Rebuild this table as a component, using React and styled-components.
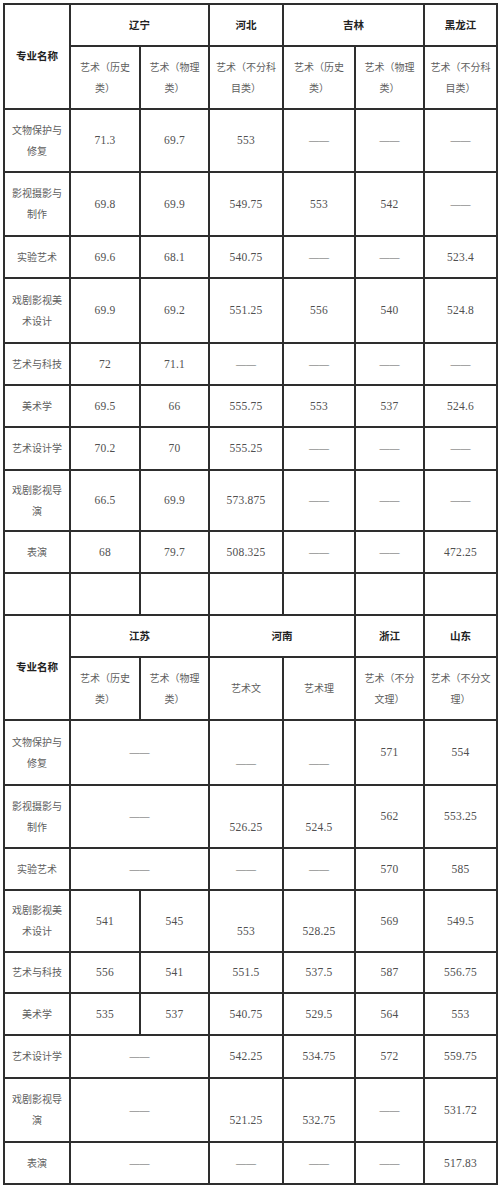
import React from "react";
import styled, { createGlobalStyle } from "styled-components";

const GlobalStyle = createGlobalStyle`
  html, body { margin: 0; padding: 0; background: #ffffff; }
  body { font-family: "Liberation Serif", "Noto Sans CJK SC", serif; }
`;

const Sheet = styled.div`
  padding: 3px 2px 3px 3px;
  width: 500px;
  box-sizing: border-box;
`;

const Grid = styled.div`
  display: grid;
  grid-template-columns: 64px 68px 67px 72px 70px 67px 71px;
  grid-template-rows: ${(p) => p.$rows.map((r) => `${r}px`).join(" ")};
  gap: 2px;
  padding: 2px;
  background: #2e2e2e;
  width: max-content;
`;

const Cell = styled.div`
  grid-column: span ${(p) => p.$span || 1};
  grid-row: span ${(p) => p.$rowSpan || 1};
  background: #ffffff;
  display: flex;
  align-items: center;
  justify-content: center;
  text-align: center;
  box-sizing: border-box;
  padding: ${(p) => (p.$drop ? "21px 5px 0" : "0 5px")};
  font-family: "Liberation Serif", "Noto Sans CJK SC", serif;
  font-size: ${(p) => (p.$head ? "10.5px" : p.$num ? "11.5px" : "10px")};
  font-weight: ${(p) => (p.$head ? 700 : 400)};
  letter-spacing: ${(p) => (p.$num ? "0.2px" : "0")};
  line-height: 21px;
  color: ${(p) => (p.$head ? "#222222" : p.$num ? "#505050" : "#5e5e5e")};
`;

const rowHeights = [
  40, 61, 61, 62, 40, 63, 40, 40, 41, 59, 40, 40,
  40, 61, 63, 61, 40, 60, 39, 40, 41, 62, 40,
];

const D = "——";

const top = {
  provinces: [
    { name: "辽宁", span: 2 },
    { name: "河北", span: 1 },
    { name: "吉林", span: 2 },
    { name: "黑龙江", span: 1 },
  ],
  subs: [
    "艺术（历史类）",
    "艺术（物理类）",
    "艺术（不分科目类）",
    "艺术（历史类）",
    "艺术（物理类）",
    "艺术（不分科目类）",
  ],
  rows: [
    ["文物保护与修复", ["71.3", "69.7", "553", D, D, D]],
    ["影视摄影与制作", ["69.8", "69.9", "549.75", "553", "542", D]],
    ["实验艺术", ["69.6", "68.1", "540.75", D, D, "523.4"]],
    ["戏剧影视美术设计", ["69.9", "69.2", "551.25", "556", "540", "524.8"]],
    ["艺术与科技", ["72", "71.1", D, D, D, D]],
    ["美术学", ["69.5", "66", "555.75", "553", "537", "524.6"]],
    ["艺术设计学", ["70.2", "70", "555.25", D, D, D]],
    ["戏剧影视导演", ["66.5", "69.9", "573.875", D, D, D]],
    ["表演", ["68", "79.7", "508.325", D, D, "472.25"]],
  ],
};

const bottom = {
  provinces: [
    { name: "江苏", span: 2 },
    { name: "河南", span: 2 },
    { name: "浙江", span: 1 },
    { name: "山东", span: 1 },
  ],
  subs: [
    "艺术（历史类）",
    "艺术（物理类）",
    "艺术文",
    "艺术理",
    "艺术（不分文理）",
    "艺术（不分文理）",
  ],
  rows: [
    ["文物保护与修复", [{ v: D, span: 2 }, { v: D, drop: true }, { v: D, drop: true }, "571", "554"]],
    ["影视摄影与制作", [{ v: D, span: 2 }, { v: "526.25", drop: true }, { v: "524.5", drop: true }, "562", "553.25"]],
    ["实验艺术", [{ v: D, span: 2 }, D, D, "570", "585"]],
    ["戏剧影视美术设计", ["541", "545", { v: "553", drop: true }, { v: "528.25", drop: true }, "569", "549.5"]],
    ["艺术与科技", ["556", "541", "551.5", "537.5", "587", "556.75"]],
    ["美术学", ["535", "537", "540.75", "529.5", "564", "553"]],
    ["艺术设计学", [{ v: D, span: 2 }, "542.25", "534.75", "572", "559.75"]],
    ["戏剧影视导演", [{ v: D, span: 2 }, { v: "521.25", drop: true }, { v: "532.75", drop: true }, D, "531.72"]],
    ["表演", [{ v: D, span: 2 }, D, D, D, "517.83"]],
  ],
};

function ValueCell({ item }) {
  const v = typeof item === "string" ? { v: item } : item;
  return (
    <Cell $span={v.span} $drop={v.drop} $num={v.v !== D}>
      {v.v}
    </Cell>
  );
}

function Section({ data, id }) {
  return (
    <>
      <Cell $head $rowSpan={2}>专业名称</Cell>
      {data.provinces.map((p, i) => (
        <Cell key={`${id}-p${i}`} $head $span={p.span}>
          {p.name}
        </Cell>
      ))}
      {data.subs.map((s, i) => (
        <Cell key={`${id}-s${i}`}>{s}</Cell>
      ))}
      {data.rows.map(([major, vals], r) => (
        <React.Fragment key={`${id}-r${r}`}>
          <Cell>{major}</Cell>
          {vals.map((v, c) => (
            <ValueCell key={c} item={v} />
          ))}
        </React.Fragment>
      ))}
    </>
  );
}

export default function App() {
  return (
    <>
      <GlobalStyle />
      <Sheet>
        <Grid $rows={rowHeights}>
          <Section data={top} id="t" />
          {Array.from({ length: 7 }).map((_, i) => (
            <Cell key={`gap-${i}`} />
          ))}
          <Section data={bottom} id="b" />
        </Grid>
      </Sheet>
    </>
  );
}
